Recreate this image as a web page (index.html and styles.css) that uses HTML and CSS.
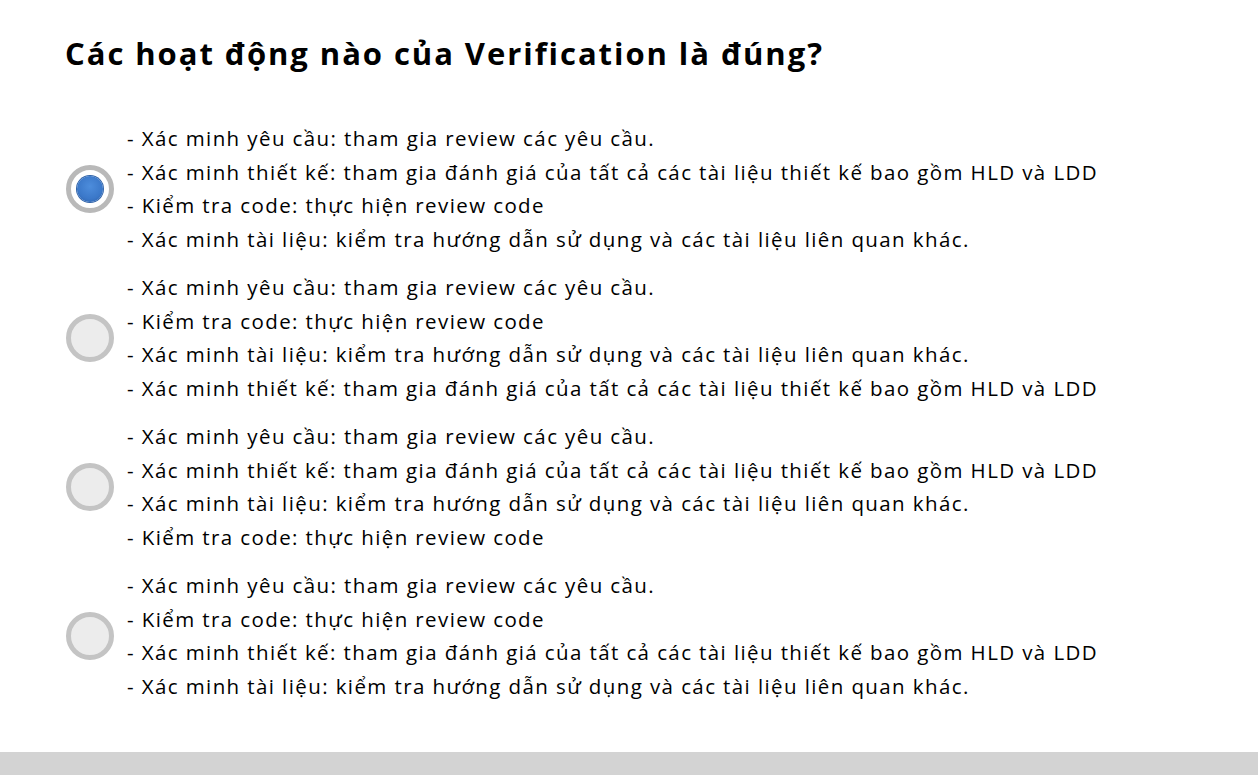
FILE: index.html
```html
<!DOCTYPE html>
<html lang="vi">
<head>
<meta charset="utf-8">
<link rel="stylesheet" href="styles.css">
</head>
<body>
<div class="page">
  <h1 class="question">Các hoạt động nào của Verification là đúng?</h1>
  <div class="options">
    <div class="option">
      <span class="radio selected"><span class="dot"></span></span>
      <div class="text">
        <div>- Xác minh yêu cầu: tham gia review các yêu cầu.</div>
        <div>- Xác minh thiết kế: tham gia đánh giá của tất cả các tài liệu thiết kế bao gồm HLD và LDD</div>
        <div>- Kiểm tra code: thực hiện review code</div>
        <div>- Xác minh tài liệu: kiểm tra hướng dẫn sử dụng và các tài liệu liên quan khác.</div>
      </div>
    </div>
    <div class="option">
      <span class="radio"></span>
      <div class="text">
        <div>- Xác minh yêu cầu: tham gia review các yêu cầu.</div>
        <div>- Kiểm tra code: thực hiện review code</div>
        <div>- Xác minh tài liệu: kiểm tra hướng dẫn sử dụng và các tài liệu liên quan khác.</div>
        <div>- Xác minh thiết kế: tham gia đánh giá của tất cả các tài liệu thiết kế bao gồm HLD và LDD</div>
      </div>
    </div>
    <div class="option">
      <span class="radio"></span>
      <div class="text">
        <div>- Xác minh yêu cầu: tham gia review các yêu cầu.</div>
        <div>- Xác minh thiết kế: tham gia đánh giá của tất cả các tài liệu thiết kế bao gồm HLD và LDD</div>
        <div>- Xác minh tài liệu: kiểm tra hướng dẫn sử dụng và các tài liệu liên quan khác.</div>
        <div>- Kiểm tra code: thực hiện review code</div>
      </div>
    </div>
    <div class="option">
      <span class="radio"></span>
      <div class="text">
        <div>- Xác minh yêu cầu: tham gia review các yêu cầu.</div>
        <div>- Kiểm tra code: thực hiện review code</div>
        <div>- Xác minh thiết kế: tham gia đánh giá của tất cả các tài liệu thiết kế bao gồm HLD và LDD</div>
        <div>- Xác minh tài liệu: kiểm tra hướng dẫn sử dụng và các tài liệu liên quan khác.</div>
      </div>
    </div>
  </div>
</div>
<div class="footer-bar"></div>
</body>
</html>
```
FILE: styles.css
```css
html, body {
  margin: 0;
  padding: 0;
  background: #ffffff;
}
body {
  font-family: "Open Sans", "Noto Sans", sans-serif;
  color: #000;
  height: 775px;
  display: flex;
  flex-direction: column;
  overflow: hidden;
}
.page {
  flex: 1;
  padding: 31px 0 0 65px;
}
.question {
  margin: 0;
  font-size: 31px;
  font-weight: 700;
  line-height: 44px;
  letter-spacing: 1.95px;
}
.options {
  margin-top: 47px;
  display: flex;
  flex-direction: column;
  gap: 15px;
}
.option {
  display: flex;
  align-items: center;
  gap: 13px;
}
.radio {
  box-sizing: border-box;
  width: 48px;
  height: 48px;
  margin-left: 1px;
  border-radius: 50%;
  border: 5px solid #c4c4c4;
  background: #ececec;
  display: flex;
  align-items: center;
  justify-content: center;
  flex: none;
}
.radio.selected {
  border-color: #b9b9b9;
  background: #ffffff;
}
.dot {
  width: 26px;
  height: 26px;
  border-radius: 50%;
  background: radial-gradient(circle at 50% 40%, #4d8ddc 0%, #3b78c9 60%, #2a5ea8 100%);
  box-shadow: 0 0 0 1px #2f62a8;
}
.text {
  font-size: 20.5px;
  line-height: 33.5px;
  letter-spacing: 1.4px;
  white-space: nowrap;
}
.footer-bar {
  height: 23px;
  background: #d3d3d3;
  flex: none;
}
```
